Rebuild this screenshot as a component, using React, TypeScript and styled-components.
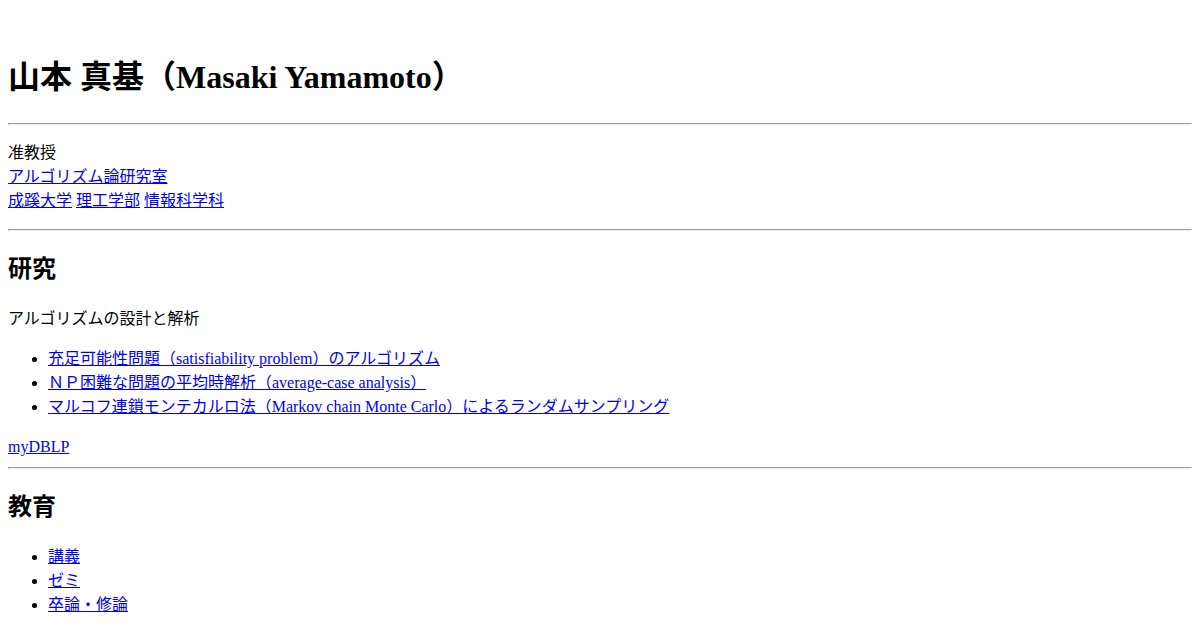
import React from "react";
import styled, { createGlobalStyle } from "styled-components";

const Global = createGlobalStyle`
  body {
    margin: 8px;
    font-family: "Liberation Serif", "Noto Sans CJK JP", serif;
    font-size: 16px;
    line-height: 1.5;
    color: #000;
    background: #fff;
    text-spacing-trim: space-all;
  }
`;

const Page = styled.div``;

const Spacer = styled.div`
  height: 24px;
`;

const Title = styled.h1`
  font-size: 32px;
  font-weight: bold;
  margin: 21.44px 0;
`;

const Rule = styled.hr`
  margin: 8px 0;
  color: gray;
  border-style: inset;
  border-width: 1px;
`;

const Section = styled.h2`
  font-size: 24px;
  font-weight: bold;
  margin: 19.92px 0;
`;

const Para = styled.p`
  margin: 16px 0;
`;

const List = styled.ul`
  margin: 16px 0;
  padding-left: 40px;
`;

const Link = styled.a`
  color: #0000ee;
  text-decoration: underline;
`;

export default function App() {
  return (
    <Page>
      <Global />
      <Spacer />
      <Title>山本 真基（Masaki Yamamoto）</Title>
      <Rule />
      <Para>
        准教授
        <br />
        <Link href="#">アルゴリズム論研究室</Link>
        <br />
        <Link href="#">成蹊大学</Link> <Link href="#">理工学部</Link>{" "}
        <Link href="#">情報科学科</Link>
      </Para>
      <Rule />
      <Section>研究</Section>
      <Para>アルゴリズムの設計と解析</Para>
      <List>
        <li>
          <Link href="#">充足可能性問題（satisfiability problem）のアルゴリズム</Link>
        </li>
        <li>
          <Link href="#">ＮＰ困難な問題の平均時解析（average-case analysis）</Link>
        </li>
        <li>
          <Link href="#">
            マルコフ連鎖モンテカルロ法（Markov chain Monte Carlo）によるランダムサンプリング
          </Link>
        </li>
      </List>
      <Link href="#">myDBLP</Link>
      <Rule />
      <Section>教育</Section>
      <List>
        <li>
          <Link href="#">講義</Link>
        </li>
        <li>
          <Link href="#">ゼミ</Link>
        </li>
        <li>
          <Link href="#">卒論・修論</Link>
        </li>
      </List>
    </Page>
  );
}
